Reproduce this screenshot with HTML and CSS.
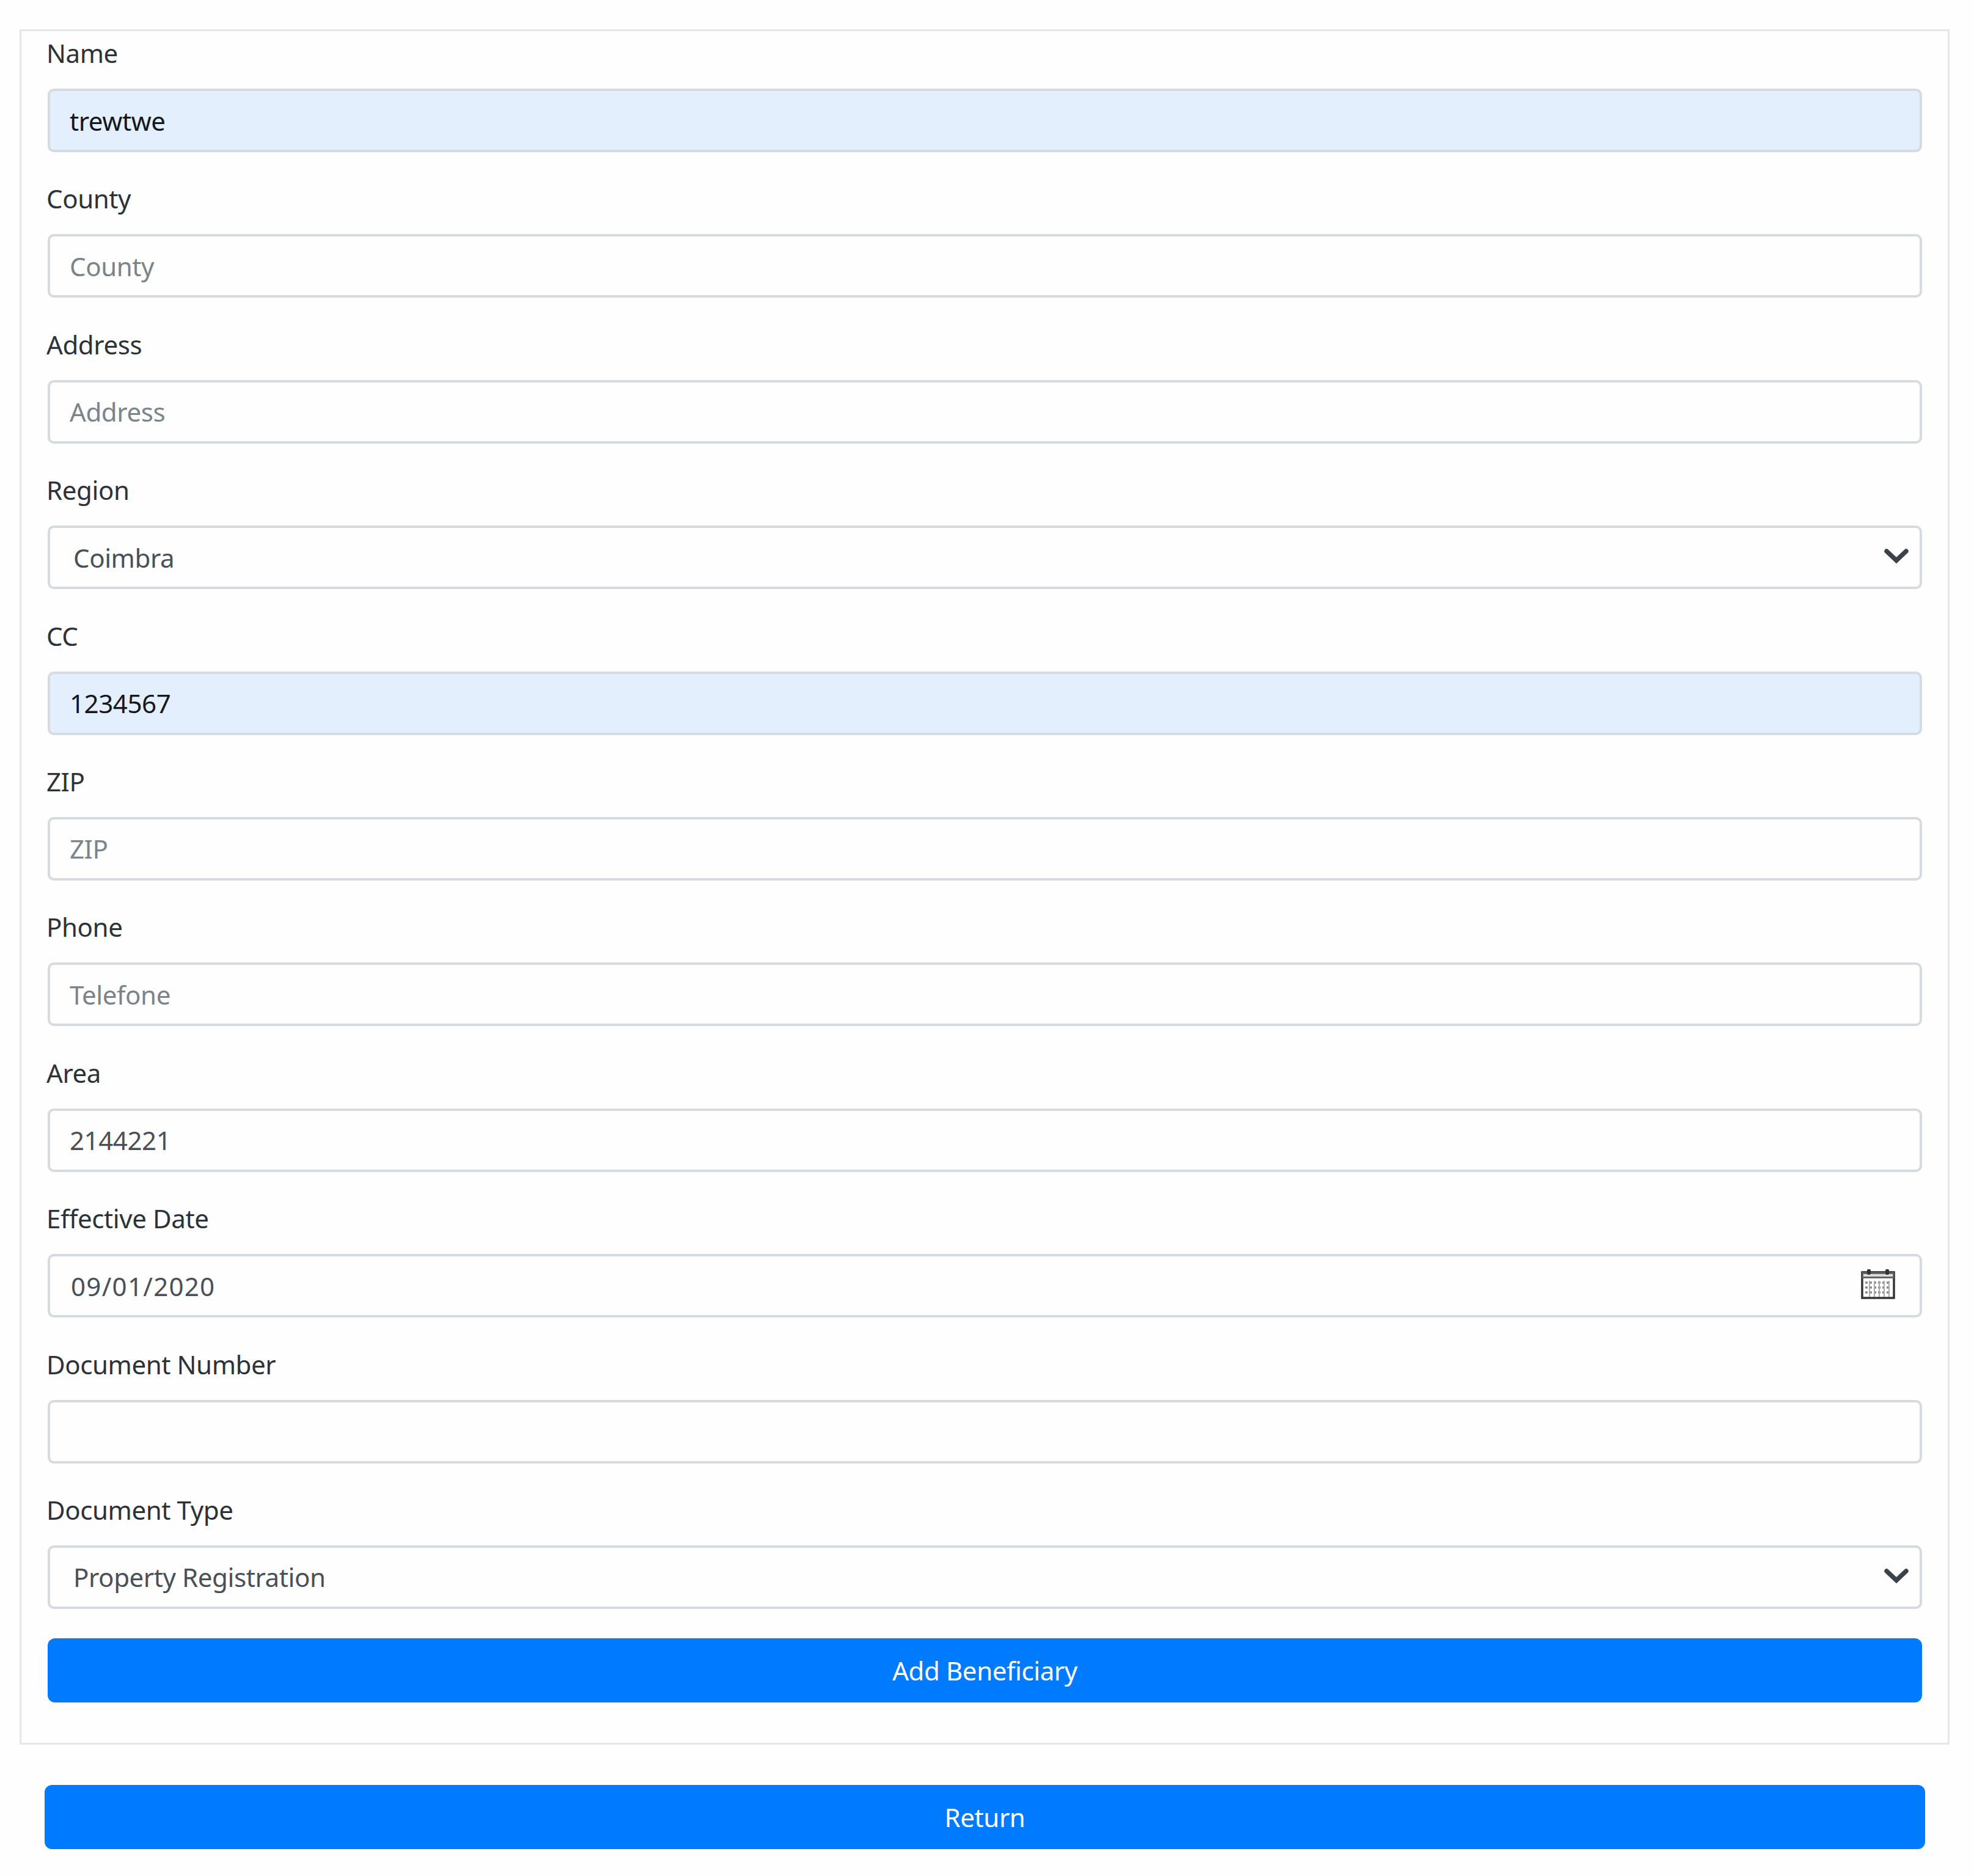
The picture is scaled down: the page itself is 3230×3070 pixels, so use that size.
FILE: index.html
```html
<!DOCTYPE html>
<html lang="en">
<head>
<meta charset="utf-8">
<title>Add Beneficiary</title>
<link rel="stylesheet" href="styles.css">
</head>
<body>
<main class="page">
  <form class="card">
    <div class="field"><label class="label">Name</label><input class="control autofilled" type="text" value="trewtwe" placeholder="Name"></div>
    <div class="field"><label class="label">County</label><input class="control" type="text" placeholder="County"></div>
    <div class="field"><label class="label">Address</label><input class="control" type="text" placeholder="Address"></div>
    <div class="field"><label class="label">Region</label>
      <div class="control-wrap">
        <select class="control select"><option>Coimbra</option></select>
        <svg class="chevron" viewBox="0 0 40 26" aria-hidden="true"><path d="M4 5 L20 20 L36 5" fill="none" stroke="#3a434c" stroke-width="7.5" stroke-linecap="round" stroke-linejoin="miter"/></svg>
      </div>
    </div>
    <div class="field"><label class="label">CC</label><input class="control autofilled" type="text" value="1234567" placeholder="CC"></div>
    <div class="field"><label class="label">ZIP</label><input class="control" type="text" placeholder="ZIP"></div>
    <div class="field"><label class="label">Phone</label><input class="control" type="text" placeholder="Telefone"></div>
    <div class="field"><label class="label">Area</label><input class="control" type="text" value="2144221" placeholder="Area"></div>
    <div class="field"><label class="label">Effective Date</label>
      <div class="control-wrap">
        <input class="control date" type="text" value="09/01/2020">
        <svg class="calendar" viewBox="0 0 56 50" aria-hidden="true">
          <rect x="2" y="6" width="52" height="42" fill="#fff" stroke="#333" stroke-width="3.5"/>
          <rect x="2" y="6" width="52" height="10" fill="#666"/>
          <rect x="4" y="9" width="48" height="4" fill="#ddd"/>
          <rect x="10" y="1" width="6" height="9" rx="2" fill="#333"/>
          <rect x="40" y="1" width="6" height="9" rx="2" fill="#333"/>
          <path d="M7 23H49M7 31H49M7 39H49" stroke="#888" stroke-width="3.5" stroke-dasharray="4 3"/>
          <path d="M14 20V46M22 20V46M30 20V46M38 20V46M46 20V46" stroke="#aaa" stroke-width="2"/>
        </svg>
      </div>
    </div>
    <div class="field"><label class="label">Document Number</label><input class="control" type="text"></div>
    <div class="field"><label class="label">Document Type</label>
      <div class="control-wrap">
        <select class="control select"><option>Property Registration</option></select>
        <svg class="chevron" viewBox="0 0 40 26" aria-hidden="true"><path d="M4 5 L20 20 L36 5" fill="none" stroke="#3a434c" stroke-width="7.5" stroke-linecap="round" stroke-linejoin="miter"/></svg>
      </div>
    </div>
    <button class="btn btn-add" type="button">Add Beneficiary</button>
  </form>
  <button class="btn btn-return" type="button">Return</button>
</main>
</body>
</html>
```
FILE: styles.css
```css
* { box-sizing: border-box; }
html, body { margin: 0; padding: 0; background: #fefefe; }
body { font-family: "Noto Sans", "Open Sans", sans-serif; font-size: 42px; color: #212529; }
.page { display: flex; flex-direction: column; padding: 48px 40px 40px 32px; }
.card {
  display: flex; flex-direction: column; gap: 40.4px;
  border: 3px solid #e4e7ea;
  padding: 0 42px 66px 43px;
  background: #fefefe;
}
.field { display: flex; flex-direction: column; }
.label { height: 94px; line-height: 72px; margin-left: -2px; letter-spacing: -0.4px; color: #2c3238; }
.control-wrap { position: relative; display: flex; }
.control {
  display: block; width: 100%; height: 104px;
  border: 4px solid #d6dbe0; border-radius: 10px;
  padding: 0 32px; background: #fefefe;
  font: inherit; letter-spacing: -0.4px; color: #495057; outline: none;
}
.control::placeholder { color: #7b838b; opacity: 1; }
.autofilled { background: #e3effd; color: #14181c; }
.select { appearance: none; -webkit-appearance: none; padding-left: 38px; background: #fefefe; }
.date { padding-left: 34px; letter-spacing: 1.3px; }
.chevron { position: absolute; right: 22px; top: 37px; width: 40px; height: 26px; }
.calendar { position: absolute; right: 44px; top: 24px; width: 56px; height: 50px; }
.btn {
  display: block; width: 100%; height: 105px;
  border: 0; border-radius: 12px; background: #007bff;
  font: inherit; letter-spacing: -0.4px; color: #fff; text-align: center;
}
.btn-add { margin-top: 8px; }
.btn-return { margin-top: 66px; width: 3077px; margin-left: 41px; }
```
